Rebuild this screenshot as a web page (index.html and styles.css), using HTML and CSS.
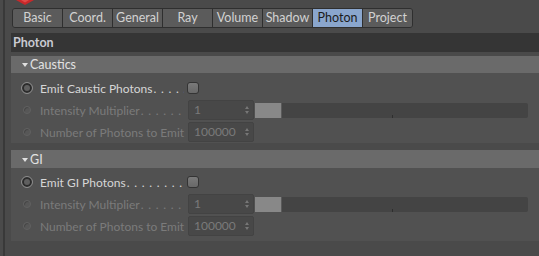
FILE: index.html
```html
<!DOCTYPE html>
<html lang="en">
<head>
    <meta charset="UTF-8">
    <title>Photon Settings</title>
    <link rel="stylesheet" href="styles.css">
</head>
<body>
    <div class="frame">
        <div class="topbar">
            <svg class="logo" width="18" height="5" viewBox="0 0 18 5">
                <polygon points="0,0 18,0 9,5" fill="#c8282a"/>
                <polygon points="5,0 13,0 9,2.5" fill="#e04a48"/>
            </svg>
        </div>

        <div class="tabs">
            <div class="tab">Basic</div>
            <div class="tab">Coord.</div>
            <div class="tab">General</div>
            <div class="tab">Ray</div>
            <div class="tab">Volume</div>
            <div class="tab">Shadow</div>
            <div class="tab active">Photon</div>
            <div class="tab">Project</div>
        </div>

        <div class="header">Photon</div>

        <div class="group">
            <div class="group-title"><span class="arrow"></span>Caustics</div>
            <div class="group-body">
                <div class="row">
                    <span class="radio"></span>
                    <span class="label"><span>Emit Caustic Photons</span><span class="dots"></span></span>
                    <span class="check"></span>
                </div>
                <div class="row off">
                    <span class="radio small"></span>
                    <span class="label"><span>Intensity Multiplier</span><span class="dots"></span></span>
                    <span class="field">1<span class="spin"></span></span>
                    <span class="slider"><span class="fill"></span><span class="tick"></span></span>
                </div>
                <div class="row off">
                    <span class="radio small"></span>
                    <span class="label"><span>Number of Photons to Emit</span></span>
                    <span class="field">100000<span class="spin"></span></span>
                </div>
            </div>
        </div>

        <div class="group gi">
            <div class="group-title"><span class="arrow"></span>GI</div>
            <div class="group-body">
                <div class="row">
                    <span class="radio"></span>
                    <span class="label"><span>Emit GI Photons</span><span class="dots"></span></span>
                    <span class="check"></span>
                </div>
                <div class="row off">
                    <span class="radio small"></span>
                    <span class="label"><span>Intensity Multiplier</span><span class="dots"></span></span>
                    <span class="field">1<span class="spin"></span></span>
                    <span class="slider"><span class="fill"></span><span class="tick"></span></span>
                </div>
                <div class="row off">
                    <span class="radio small"></span>
                    <span class="label"><span>Number of Photons to Emit</span></span>
                    <span class="field">100000<span class="spin"></span></span>
                </div>
            </div>
        </div>
    </div>
</body>
</html>
```

FILE: styles.css
```css
body {
    margin: 0;
    padding-left: 3px;
    background-color: #4a4a4a;
    font-family: Lato, "Noto Sans", sans-serif;
    font-size: 12.5px;
    color: #d6d6d6;
    height: 256px;
    overflow: hidden;
}
.frame {
    border-left: 2px solid #393939;
    padding-left: 6px;
    height: 256px;
}
.topbar {
    height: 8px;
    position: relative;
}
.logo {
    position: absolute;
    left: 5px;
    top: 0;
}
.tabs {
    display: flex;
    margin-left: 1px;
    width: 399px;
    height: 18px;
    border: 1px solid #2f2f2f;
    border-radius: 3px;
    overflow: hidden;
}
.tab {
    width: 49px;
    border-right: 1px solid #2f2f2f;
    background: #5b5b5b;
    color: #d2d2d2;
    text-align: center;
    line-height: 18px;
}
.tab:last-child {
    border-right: none;
}
.tab.active {
    background: #8aa6cd;
    color: #1c1c1c;
}
.header {
    margin-top: 5px;
    height: 19px;
    line-height: 19px;
    padding-left: 2px;
    background: #353535;
    color: #c9cad2;
    font-weight: bold;
}
.group {
    margin-top: 4px;
}
.group.gi {
    margin-top: 7px;
}
.group-title {
    height: 17px;
    line-height: 17px;
    background: #6a6a6a;
    color: #e2e2e2;
    display: flex;
    align-items: center;
    padding-left: 11px;
}
.gi .group-title {
    height: 18px;
}
.arrow {
    width: 0;
    height: 0;
    border-left: 3.5px solid transparent;
    border-right: 3.5px solid transparent;
    border-top: 4px solid #e0e0e0;
    margin-right: 2px;
    margin-top: 1px;
}
.group-body {
    background: #515151;
    padding: 4px 0 0 0;
    height: 66px;
}
.gi .group-body {
    padding-top: 3px;
    height: 70px;
}
.row {
    display: flex;
    align-items: center;
    height: 22px;
    padding-left: 10px;
    font-size: 12px;
}
.radio {
    width: 10px;
    height: 10px;
    border-radius: 50%;
    border: 1px solid #8c8c8c;
    box-shadow: inset 0 0 0 2px #2c2c2c;
    background: #5f5f5f;
    margin-right: 7px;
    margin-left: 0;
}
.radio.small {
    width: 6px;
    height: 6px;
    border: 1px solid #616161;
    box-shadow: inset 1px 1px 0 #454545;
    background: #575757;
    margin: 0 9px 0 2px;
}
.label {
    display: flex;
    width: 148px;
    white-space: nowrap;
    overflow: hidden;
}
.dots {
    flex: 1;
    overflow: hidden;
    margin-left: 1px;
    margin-right: 4px;
}
.dots::after {
    content: ". . . . . . . . . . . . . . . . . . . . . . .";
    letter-spacing: 0.8px;
}
.off {
    color: #7b7b7b;
}
.check {
    width: 10px;
    height: 10px;
    border: 1px solid #343434;
    border-radius: 3px;
    background: linear-gradient(#7a7a7a, #686868);
    margin-left: -1px;
}
.field {
    position: relative;
    box-sizing: border-box;
    width: 66px;
    height: 20px;
    line-height: 18px;
    padding-left: 5px;
    background: #484848;
    border: 1px solid #434343;
    border-radius: 2px;
    color: #7a7a7a;
}
.spin {
    position: absolute;
    right: 4px;
    top: 5px;
    width: 0;
    height: 0;
    border-left: 2px solid transparent;
    border-right: 2px solid transparent;
    border-bottom: 3px solid #777;
}
.spin::after {
    content: "";
    position: absolute;
    left: -2px;
    top: 5px;
    border-left: 2px solid transparent;
    border-right: 2px solid transparent;
    border-top: 3px solid #777;
}
.slider {
    position: relative;
    display: flex;
    margin-left: 1px;
    width: 273px;
    height: 15px;
    background: #444444;
    border-radius: 2px;
}
.fill {
    width: 26px;
    background: #888888;
    border-right: 1px solid #5a5a5a;
}
.tick {
    position: absolute;
    left: 137px;
    bottom: 0;
    width: 1px;
    height: 3px;
    background: #2e2e2e;
}
```
